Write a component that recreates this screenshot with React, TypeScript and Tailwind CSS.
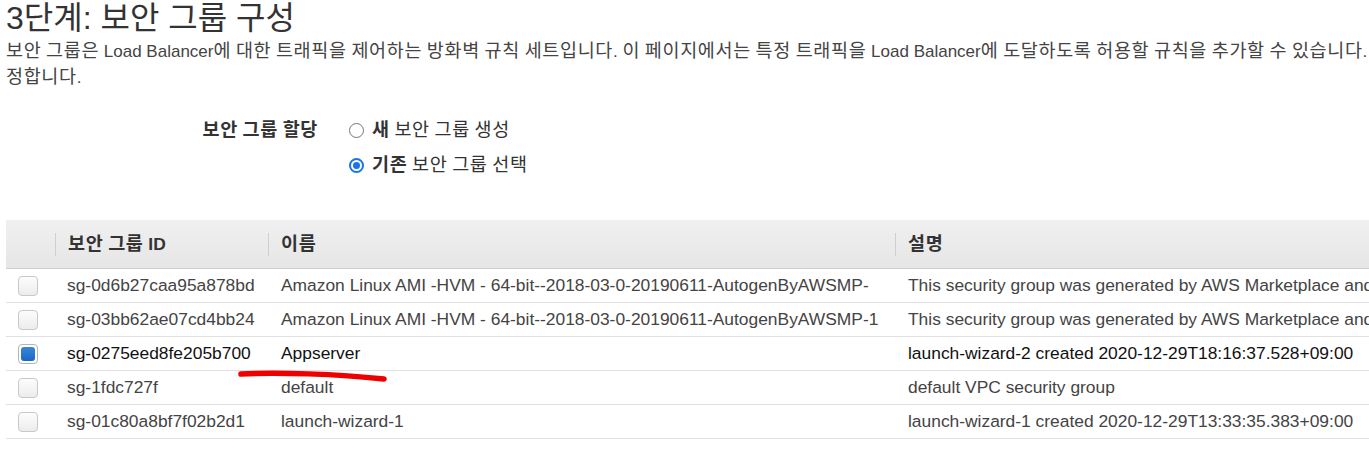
import React from "react";

const font = {
  fontFamily: '"Liberation Sans", Arial, "Noto Sans CJK KR", sans-serif',
};

// Hangul runs get a slightly larger size so they take the width of the original Korean face
function Ko({ children }: { children: string }) {
  const parts = children.split(/([\uac00-\ud7a3]+)/);
  return (
    <>
      {parts.map((p, i) =>
        /[\uac00-\ud7a3]/.test(p) ? (
          <span key={i} className="text-[18.5px] tracking-[0.65px]">
            {p}
          </span>
        ) : (
          p
        )
      )}
    </>
  );
}

const rows = [
  {
    id: "sg-0d6b27caa95a878bd",
    name: "Amazon Linux AMI -HVM - 64-bit--2018-03-0-20190611-AutogenByAWSMP-",
    desc: "This security group was generated by AWS Marketplace and is based on recommended settings for Amazon Linux AMI",
  },
  {
    id: "sg-03bb62ae07cd4bb24",
    name: "Amazon Linux AMI -HVM - 64-bit--2018-03-0-20190611-AutogenByAWSMP-1",
    desc: "This security group was generated by AWS Marketplace and is based on recommended settings for Amazon Linux AMI",
  },
  {
    id: "sg-0275eed8fe205b700",
    name: "Appserver",
    desc: "launch-wizard-2 created 2020-12-29T18:16:37.528+09:00",
    selected: true,
  },
  { id: "sg-1fdc727f", name: "default", desc: "default VPC security group" },
  {
    id: "sg-01c80a8bf7f02b2d1",
    name: "launch-wizard-1",
    desc: "launch-wizard-1 created 2020-12-29T13:33:35.383+09:00",
  },
];

function Checkbox({ checked }: { checked?: boolean }) {
  return checked ? (
    <span className="block w-[20px] h-[20px] rounded-[4px] border border-[#b5b5b5] bg-white p-[2px]">
      <span className="block w-full h-full rounded-[3px] bg-gradient-to-b from-[#3a87d8] to-[#1a66c4]" />
    </span>
  ) : (
    <span className="block w-[20px] h-[20px] rounded-[4px] border border-[#c8c8c8] bg-gradient-to-b from-[#fdfdfd] to-[#ececec]" />
  );
}

function Radio({ checked }: { checked?: boolean }) {
  return checked ? (
    <span className="flex items-center justify-center w-[15px] h-[15px] rounded-full border-2 border-[#1a73e8] bg-white">
      <span className="block w-[7px] h-[7px] rounded-full bg-[#1a73e8]" />
    </span>
  ) : (
    <span className="block w-[15px] h-[15px] rounded-full border border-[#767676] bg-white" />
  );
}

export default function App() {
  return (
    <div className="w-[1369px] h-[450px] overflow-hidden bg-white text-[#444]" style={font}>
      <div className="w-[1900px] pl-[6px]">
        <h1 className="text-[32px] leading-[36px] text-[#333] font-normal">3단계: 보안 그룹 구성</h1>
        <p className="text-[17px] leading-[25px] text-[#444] mt-[2px]">
          <span className="whitespace-nowrap">
            <Ko>
              보안 그룹은 Load Balancer에 대한 트래픽을 제어하는 방화벽 규칙 세트입니다. 이 페이지에서는 특정 트래픽을 Load Balancer에 도달하도록 허용할 규칙을 추가할 수 있습니다. 먼저 새 보안 그룹을 생성할지 아니면 기존 보안 그룹을 선택할지 결
            </Ko>
          </span>
          <br />
          <Ko>정합니다.</Ko>
        </p>

        <div className="flex mt-[29px] text-[17px]">
          <div className="w-[312px] text-right font-bold text-[#333] leading-[22px]">
            <Ko>보안 그룹 할당</Ko>
          </div>
          <div className="ml-[31px] flex flex-col gap-[12px] leading-[22px] text-[#333]">
            <label className="flex items-center gap-[8px]">
              <Radio />
              <span>
                <b>
                  <Ko>새</Ko>
                </b>{" "}
                <Ko>보안 그룹 생성</Ko>
              </span>
            </label>
            <label className="flex items-center gap-[8px]">
              <Radio checked />
              <span>
                <b>
                  <Ko>기존</Ko>
                </b>{" "}
                <Ko>보안 그룹 선택</Ko>
              </span>
            </label>
          </div>
        </div>

        <div className="relative mt-[43px] w-[1800px] text-[17.4px]">
          <div className="grid grid-cols-[49px_213px_627px_1fr] h-[49px] items-center bg-gradient-to-b from-[#f0f0f0] to-[#e6e6e6] border-b border-[#cfcfcf] font-bold text-[#333]">
            <div />
            <div className="border-l border-[#cfcfcf] h-[23px] flex items-center pl-[12px]">
              <span>
                <Ko>보안 그룹 ID</Ko>
              </span>
            </div>
            <div className="border-l border-[#cfcfcf] h-[23px] flex items-center pl-[12px]">
              <span>
                <Ko>이름</Ko>
              </span>
            </div>
            <div className="border-l border-[#cfcfcf] h-[23px] flex items-center pl-[12px]">
              <span>
                <Ko>설명</Ko>
              </span>
            </div>
          </div>
          {rows.map((r) => (
            <div
              key={r.id}
              className={`grid grid-cols-[49px_213px_627px_1fr] h-[34px] items-center border-b border-[#e1e1e1] whitespace-nowrap ${
                r.selected ? "text-[#111]" : "text-[#444]"
              }`}
            >
              <div className="pl-[12px]">
                <Checkbox checked={r.selected} />
              </div>
              <div className="pl-[12px]">{r.id}</div>
              <div className="pl-[13px] overflow-hidden">{r.name}</div>
              <div className="pl-[13px]">{r.desc}</div>
            </div>
          ))}
          <svg
            className="absolute left-[231px] top-[150px]"
            width="160"
            height="16"
            viewBox="0 0 160 16"
          >
            <path
              d="M4 4 C 40 2, 100 4, 147 9"
              stroke="#ee0000"
              strokeWidth="5.5"
              strokeLinecap="round"
              fill="none"
            />
          </svg>
        </div>
      </div>
    </div>
  );
}
